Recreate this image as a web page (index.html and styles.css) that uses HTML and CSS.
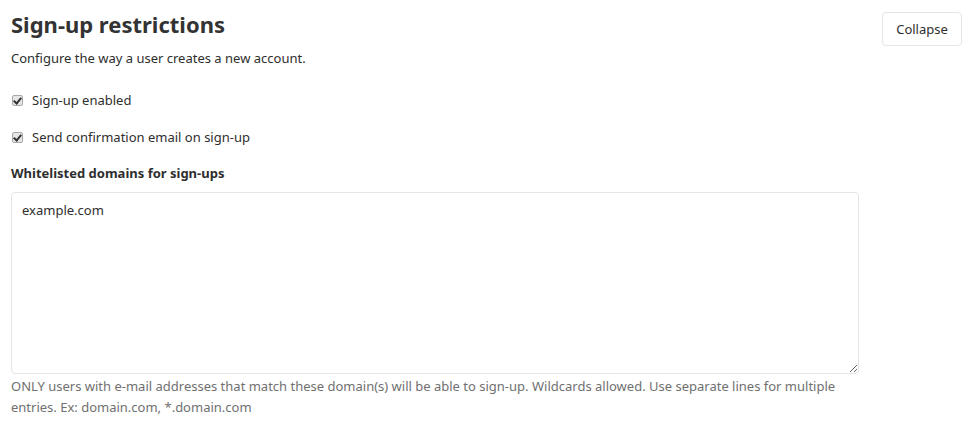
FILE: index.html
```html
<!DOCTYPE html>
<html>
<head>
<meta charset="utf-8">
<link rel="stylesheet" href="styles.css">
</head>
<body>
<section class="settings">
  <div class="settings-header">
    <div class="header-text">
      <h4 class="title">Sign-up restrictions</h4>
      <p class="desc">Configure the way a user creates a new account.</p>
    </div>
    <button class="btn">Collapse</button>
  </div>
  <div class="settings-content">
    <div class="check-row"><input type="checkbox" checked><span>Sign-up enabled</span></div>
    <div class="check-row"><input type="checkbox" checked><span>Send confirmation email on sign-up</span></div>
    <label class="field-label">Whitelisted domains for sign-ups</label>
    <textarea class="domains">example.com</textarea>
    <p class="help">ONLY users with e-mail addresses that match these domain(s) will be able to sign-up. Wildcards allowed. Use separate lines for multiple entries. Ex: domain.com, *.domain.com</p>
  </div>
</section>
</body>
</html>
```
FILE: styles.css
```css
html, body { margin: 0; padding: 0; background: #fff; }
body {
  font-family: "Noto Sans", "DejaVu Sans", sans-serif;
  font-size: 13px;
  color: #2e2e2e;
}
.settings { padding: 0 15px 0 11px; }
.settings-header {
  display: flex;
  justify-content: space-between;
  align-items: flex-start;
}
.title {
  margin: 11px 0 0;
  font-size: 22px;
  line-height: 26px;
  font-weight: 700;
  color: #333;
}
.desc { margin: 11px 0 0; line-height: 20px; }
.btn {
  margin-top: 12px;
  width: 80px;
  height: 34px;
  padding: 0;
  background: #fff;
  border: 1px solid #e5e5e5;
  border-radius: 4px;
  font-family: inherit;
  font-size: 13px;
  color: #2e2e2e;
}
.settings-content { width: 848px; padding-top: 22px; }
.check-row { display: flex; align-items: center; height: 20px; margin-bottom: 17px; }
.check-row input {
  appearance: none;
  -webkit-appearance: none;
  box-sizing: border-box;
  margin: 0 9px 0 1px;
  width: 11px;
  height: 11px;
  border: 1px solid #a8a8a8;
  border-radius: 2px;
  background: #e6e6e6;
  position: relative;
}
.check-row input:checked::after {
  content: "";
  position: absolute;
  left: 2px;
  top: 0px;
  width: 3px;
  height: 6px;
  border: solid #333;
  border-width: 0 2px 2px 0;
  transform: rotate(40deg);
}
.field-label { display: block; font-weight: 700; line-height: 20px; margin-bottom: 9px; margin-top: -1px; }
.domains {
  display: block;
  box-sizing: border-box;
  width: 848px;
  height: 182px;
  border: 1px solid #e5e5e5;
  border-radius: 4px;
  padding: 8px 10px;
  font-family: inherit;
  font-size: 13px;
  color: #2e2e2e;
  resize: vertical;
}
.help { margin: 2px 0 0; color: #707070; line-height: 21px; }
```
